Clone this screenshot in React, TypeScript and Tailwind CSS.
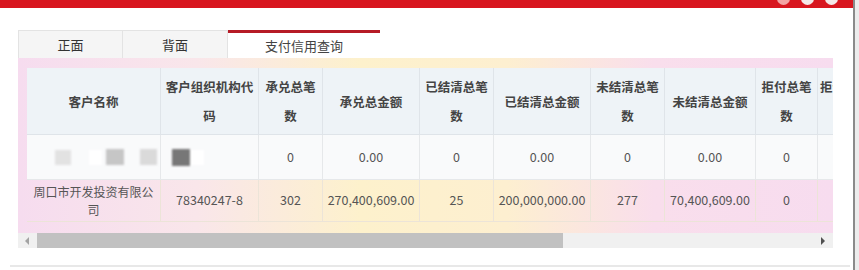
import React from "react"

const cols = [134, 98, 64, 97, 74, 97, 74, 91, 62, 60]

const headers: React.ReactNode[] = [
  "客户名称",
  <>客户组织机构代<br />码</>,
  <>承兑总笔<br />数</>,
  "承兑总金额",
  <>已结清总笔<br />数</>,
  "已结清总金额",
  <>未结清总笔<br />数</>,
  "未结清总金额",
  <>拒付总笔<br />数</>,
  <>
    <div className="text-left pl-[2px]">拒付总笔</div>
    <div className="text-center">数</div>
  </>,
]

const row1 = ["", "", "0", "0.00", "0", "0.00", "0", "0.00", "0", ""]
const row2 = [
  "",
  "78340247-8",
  "302",
  "270,400,609.00",
  "25",
  "200,000,000.00",
  "277",
  "70,400,609.00",
  "0",
  "",
]

function Blur() {
  return (
    <div className="flex items-center blur-[1px]">
      <div className="w-[16px] h-[15px] bg-[#e2e2e2]" />
      <div className="ml-[18px] w-[13px] h-[15px] bg-white" />
      <div className="ml-[4px] w-[18px] h-[16px] bg-[#c6c6c6]" />
      <div className="ml-[16px] w-[17px] h-[16px] bg-[#dadada]" />
    </div>
  )
}

export default function App() {
  return (
    <div
      className="w-[859px] h-[270px] bg-white flex overflow-hidden"
      style={{ fontFamily: '"Noto Sans CJK SC", "Noto Sans", sans-serif' }}
    >
      <div className="w-[853px] flex flex-col">
        {/* title bar */}
        <div className="h-[8px] bg-[#d8161f] flex justify-end items-end pr-[15px] gap-[11px] overflow-hidden">
          <div className="w-[13px] h-[13px] rounded-full bg-[#f3a3a3] mb-[3px]" />
          <div className="w-[13px] h-[13px] rounded-full bg-[#f4e8e8] mb-[3px]" />
          <div className="w-[13px] h-[13px] rounded-full bg-[#f4e8e8] mb-[3px]" />
        </div>

        <div className="pl-[18px] pt-[22px] flex-1 flex flex-col">
          {/* tabs */}
          <div className="flex h-[28px] text-[13px] text-[#333]">
            <div className="w-[105px] flex items-center justify-center bg-[#f5f5f5] border border-[#e3e3e3] border-b-0">
              正面
            </div>
            <div className="w-[105px] flex items-center justify-center bg-[#f5f5f5] border border-[#e3e3e3] border-l-0 border-b-0">
              背面
            </div>
            <div className="w-[152px] flex items-center justify-center bg-white border-t-[3px] border-[#b61b26] text-[#444]">
              支付信用查询
            </div>
          </div>

          {/* panel */}
          <div className="w-[815px] h-[190px] flex flex-col overflow-hidden bg-[linear-gradient(90deg,#f6dcef_0%,#f9e6ea_22%,#fdf1cc_42%,#fdefd0_60%,#f9deec_78%,#f7dcef_100%)]">
            <div className="pt-[10px] pl-[9px] overflow-hidden">
              <div className="flex flex-col w-max">
                {/* header */}
                <div className="flex h-[67px]">
                  {headers.map((h, i) => (
                    <div
                      key={i}
                      style={{ width: cols[i] }}
                      className={
                        i === 9
                          ? "flex flex-col justify-center text-[12.5px] font-semibold text-[#444] leading-[29px] bg-[#eef3f7] border-b border-[#dfe4e9]"
                          : "flex items-center justify-center text-center text-[12.5px] font-semibold text-[#444] leading-[29px] bg-[#eef3f7] border-r border-b border-[#dfe4e9]"
                      }
                    >
                      {i === 9 ? h : <span>{h}</span>}
                    </div>
                  ))}
                </div>
                {/* row 1 */}
                <div className="flex h-[45px]">
                  {row1.map((c, i) => (
                    <div
                      key={i}
                      style={{ width: cols[i] }}
                      className="flex items-center justify-center text-[12.5px] text-[#555] bg-[#f9fafb] border-r border-b border-[#e6e8ea]"
                    >
                      {i === 0 ? (
                        <div className="pl-[28px] w-full">
                          <Blur />
                        </div>
                      ) : i === 1 ? (
                        <div className="flex items-center blur-[1px] w-full pl-[11px]">
                          <div className="w-[18px] h-[17px] bg-[#777777]" />
                          <div className="w-[14px] h-[15px] bg-white" />
                        </div>
                      ) : (
                        c
                      )}
                    </div>
                  ))}
                </div>
                {/* row 2 */}
                <div className="flex h-[42px]">
                  {row2.map((c, i) => (
                    <div
                      key={i}
                      style={{ width: cols[i] }}
                      className="flex items-center justify-center text-center text-[12.5px] text-[#555] border-r border-b border-[#ece4d8]"
                    >
                      {i === 0 ? (
                        <span className="text-[12px] leading-[18px]">
                          周口市开发投资有限公
                          <br />司
                        </span>
                      ) : (
                        c
                      )}
                    </div>
                  ))}
                </div>
              </div>
            </div>

            {/* scrollbar */}
            <div className="mt-auto h-[15px] flex bg-[#f0f0f0]">
              <div className="w-[19px] flex items-center justify-center">
                <svg width="5" height="8" viewBox="0 0 5 8">
                  <path d="M4 0 L0 4 L4 8 Z" fill="#a3a3a3" />
                </svg>
              </div>
              <div className="w-[526px] bg-[#c1c1c1]" />
              <div className="flex-1" />
              <div className="w-[19px] flex items-center justify-center">
                <svg width="5" height="8" viewBox="0 0 5 8">
                  <path d="M0 0 L4 4 L0 8 Z" fill="#505050" />
                </svg>
              </div>
            </div>
          </div>

          <div className="mt-auto mb-[3px] -ml-[8px] w-[840px] h-[2px] bg-[#e8e8e8]" />
        </div>
      </div>
      <div className="w-[6px] border-l-2 border-[#8a8a8a] bg-[#ececec]" />
    </div>
  )
}
